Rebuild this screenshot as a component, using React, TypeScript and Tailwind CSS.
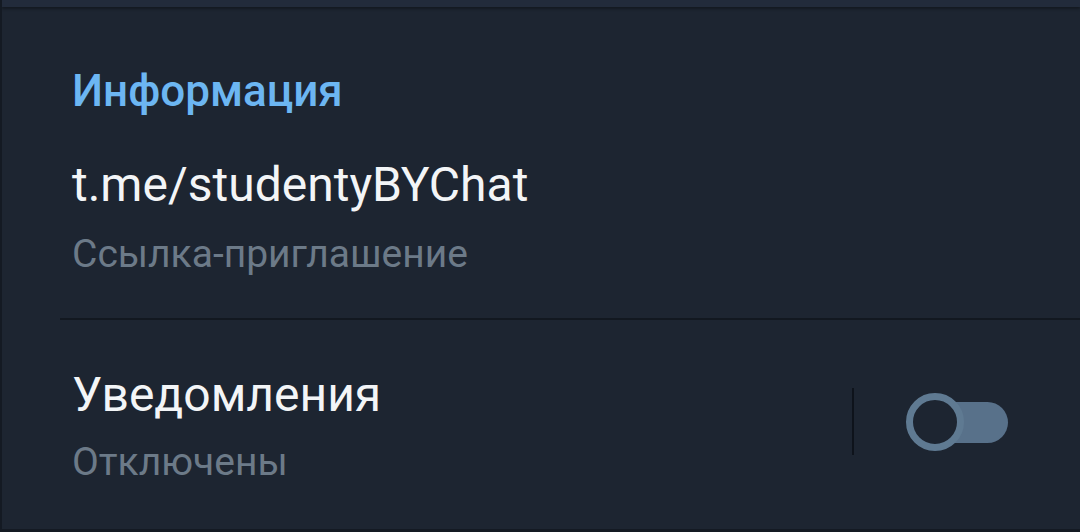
export default function App() {
  return (
    <div
      className="w-[1080px] h-[532px] bg-[#1d2531] flex flex-col border-l-2 border-b-[3px] border-[#141a23] overflow-hidden"
      style={{ fontFamily: 'Roboto, "Noto Sans", sans-serif' }}
    >
      {/* top strip */}
      <div className="h-[7px] bg-[#222b3b] shadow-[0_2px_3px_rgba(0,0,0,0.35)]" />

      {/* Info section */}
      <div className="flex flex-col pl-[70px]">
        <div className="mt-[62px] text-[44px] leading-[44px] font-medium text-[#6cb6f2]">Информация</div>
        <div className="mt-[48px] text-[48px] leading-[48px] text-[#f3f5f7]">t.me/studentyBYChat</div>
        <div className="mt-[26px] text-[39px] leading-[39px] text-[#6c7a88]">Ссылка-приглашение</div>
      </div>

      <div className="mt-[44px] ml-[58px] h-[2px] bg-[#121820]" />

      {/* Notifications row */}
      <div className="flex flex-1">
        <div className="flex flex-col pl-[70px] flex-1">
          <div className="mt-[51px] text-[48px] leading-[48px] text-[#f3f5f7]">Уведомления</div>
          <div className="mt-[24px] text-[39px] leading-[39px] text-[#6c7a88]">Отключены</div>
        </div>
        <div className="flex items-center gap-[52px] pr-[72px] pb-[6px]">
          <div className="w-[2px] h-[67px] bg-[#0e131b]" />
          <div className="relative w-[102px] h-[58px]">
            <div className="absolute right-0 top-[9px] w-[86px] h-[41px] rounded-full bg-[#58718a]" />
            <div className="absolute left-0 top-0 w-[58px] h-[58px] rounded-full border-[7px] border-[#5f7a92] bg-[#1d2531]" />
          </div>
        </div>
      </div>
    </div>
  );
}
